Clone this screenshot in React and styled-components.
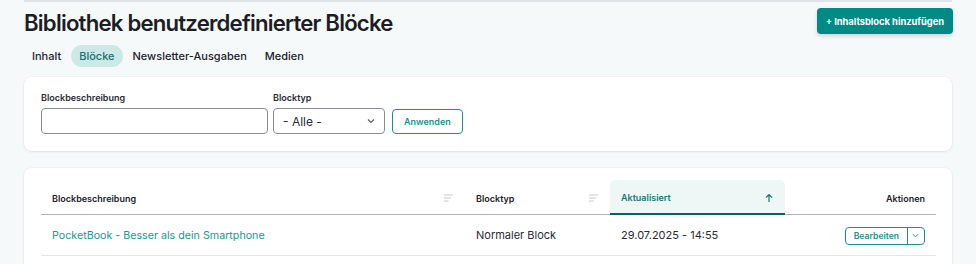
import React from 'react';
import styled, {createGlobalStyle} from 'styled-components';

const GlobalStyle = createGlobalStyle`
    body{
        margin: 0;
        background: #f5f9fa;
        font-family: Inter, "Noto Sans", sans-serif;
        color: #22222a;
    }
`;

const Page = styled.div`
    padding: 0 24px;
    width: 928px;
`;

const TopLine = styled.div`
    height: 2px;
    background: #e1e4e7;
`;

const Header = styled.div`
    display: flex;
    justify-content: space-between;
    align-items: flex-start;
    padding-top: 6px;
`;

const Title = styled.h1`
    margin: 0;
    font-size: 22.2px;
    font-weight: 600;
    letter-spacing: -0.8px;
    line-height: 30px;
    color: #1d1d24;
`;

const PrimaryButton = styled.button`
    margin-right: -1px;
    height: 26px;
    padding: 0 9px;
    border: none;
    border-radius: 4px;
    background: #008a86;
    color: #fff;
    font-family: inherit;
    font-size: 9.3px;
    font-weight: 700;
    box-shadow: 0 2px 4px rgba(0,0,0,0.15);
`;

const Tabs = styled.div`
    display: flex;
    gap: 2px;
    margin-top: 7px;
`;

const Tab = styled.div`
    height: 22px;
    line-height: 22px;
    padding: 0 8px;
    border-radius: 11px;
    font-size: 11px;
    font-weight: 500;
    color: ${p => p.$active ? '#15726e' : '#22222a'};
    background: ${p => p.$active ? '#cde9e7' : 'transparent'};
`;

const Card = styled.div`
    background: #fff;
    border-radius: 8px;
    box-shadow: 0 1px 3px rgba(0,0,0,0.08), 0 0 0 1px rgba(0,0,0,0.02);
`;

const FilterCard = styled(Card)`
    margin-top: 10px;
    height: 74px;
    padding: 0 17px 17px;
    box-sizing: border-box;
    display: flex;
    align-items: flex-end;
    gap: 5px;
`;

const Field = styled.div`
    display: flex;
    flex-direction: column;
    gap: 5px;
`;

const Label = styled.label`
    font-size: 9px;
    font-weight: 600;
    color: #2a2a33;
`;

const Input = styled.input`
    box-sizing: border-box;
    width: ${p => p.$w}px;
    height: 26px;
    border: 1px solid #8c8c96;
    border-radius: 4px;
`;

const Select = styled.div`
    box-sizing: border-box;
    width: 112px;
    height: 26px;
    border: 1px solid #8c8c96;
    border-radius: 4px;
    display: flex;
    align-items: center;
    justify-content: space-between;
    padding: 0 8px 0 9px;
    font-size: 12px;
    color: #2a2a33;
`;

const OutlineButton = styled.button`
    box-sizing: border-box;
    height: 25px;
    padding: 0 11px;
    border: 1px solid #1d8f8a;
    border-radius: 4px;
    background: #fff;
    color: #1d8f8a;
    font-family: inherit;
    font-size: 9px;
    font-weight: 600;
    margin-left: 2px;
`;

const TableCard = styled(Card)`
    margin-top: 17px;
    padding: 12px 16px 0 17px;
    height: 120px;
`;

const Table = styled.div`
    display: grid;
    grid-template-columns: 424px 145px 175px 151px;
`;

const HeadCell = styled.div`
    height: 35px;
    box-sizing: border-box;
    display: flex;
    align-items: center;
    justify-content: ${p => p.$right ? 'flex-end' : 'space-between'};
    padding: 2px 11px 0;
    font-size: 9px;
    font-weight: 600;
    color: ${p => p.$active ? '#157a76' : '#22222a'};
    background: ${p => p.$active ? '#eef7f6' : 'transparent'};
    border-radius: ${p => p.$active ? '5px 5px 0 0' : '0'};
    border-bottom: ${p => p.$active ? '2px solid #07625f' : '1px solid #b2b2b8'};
    margin-bottom: ${p => p.$active ? '-1px' : '0'};
`;

const Cell = styled.div`
    height: 41px;
    box-sizing: border-box;
    display: flex;
    align-items: center;
    justify-content: ${p => p.$right ? 'flex-end' : 'flex-start'};
    padding: 0 11px;
    font-size: ${p => p.$link ? 10.7 : 11}px;
    color: ${p => p.$link ? '#1a9690' : '#2a2a33'};
    border-bottom: 1px solid #e3e5e8;
`;

const SplitButton = styled.div`
    display: flex;
    height: 18px;
    box-sizing: border-box;
    border: 1px solid #1d8f8a;
    border-radius: 4px;
    margin-top: 1px;
    span{
        display: flex;
        align-items: center;
        padding: 0 8px;
        font-size: 8.6px;
        font-weight: 600;
        color: #1d8f8a;
    }
    span + span{
        border-left: 1px solid #1d8f8a;
        padding: 0 4px 0 3px;
    }
`;

const Chevron = ({size = 10, color = '#555'}) => (
    <svg width={size} height={size} viewBox="0 0 10 10">
        <path d="M2 3.5 L5 6.5 L8 3.5" fill="none" stroke={color} strokeWidth="1.1" />
    </svg>
);

const SortIcon = () => (
    <svg width="10" height="8" viewBox="0 0 10 8">
        <rect x="0" y="0.5" width="9" height="1" fill="#c7c7cc" />
        <rect x="0" y="3.5" width="7" height="1" fill="#c7c7cc" />
        <rect x="0" y="6.5" width="4.5" height="1" fill="#c7c7cc" />
    </svg>
);

const ArrowUp = () => (
    <svg width="10" height="10" viewBox="0 0 10 10">
        <path d="M5 9 V1.5 M2 4.5 L5 1.5 L8 4.5" fill="none" stroke="#157a76" strokeWidth="1.2" />
    </svg>
);

const App = () => {
    return (
        <Page>
            <GlobalStyle />
            <TopLine />
            <Header>
                <Title>Bibliothek benutzerdefinierter Blöcke</Title>
                <PrimaryButton>+ Inhaltsblock hinzufügen</PrimaryButton>
            </Header>
            <Tabs>
                <Tab>Inhalt</Tab>
                <Tab $active>Blöcke</Tab>
                <Tab>Newsletter-Ausgaben</Tab>
                <Tab>Medien</Tab>
            </Tabs>
            <FilterCard>
                <Field>
                    <Label>Blockbeschreibung</Label>
                    <Input $w={227} />
                </Field>
                <Field>
                    <Label>Blocktyp</Label>
                    <Select>
                        <span>- Alle -</span>
                        <Chevron />
                    </Select>
                </Field>
                <OutlineButton>Anwenden</OutlineButton>
            </FilterCard>
            <TableCard>
                <Table>
                    <HeadCell>Blockbeschreibung <SortIcon /></HeadCell>
                    <HeadCell>Blocktyp <SortIcon /></HeadCell>
                    <HeadCell $active>Aktualisiert <ArrowUp /></HeadCell>
                    <HeadCell $right>Aktionen</HeadCell>
                    <Cell $link>PocketBook - Besser als dein Smartphone</Cell>
                    <Cell>Normaler Block</Cell>
                    <Cell>29.07.2025 - 14:55</Cell>
                    <Cell $right>
                        <SplitButton>
                            <span>Bearbeiten</span>
                            <span><Chevron size={9} color="#1d8f8a" /></span>
                        </SplitButton>
                    </Cell>
                </Table>
            </TableCard>
        </Page>
    );
};

export default App;
